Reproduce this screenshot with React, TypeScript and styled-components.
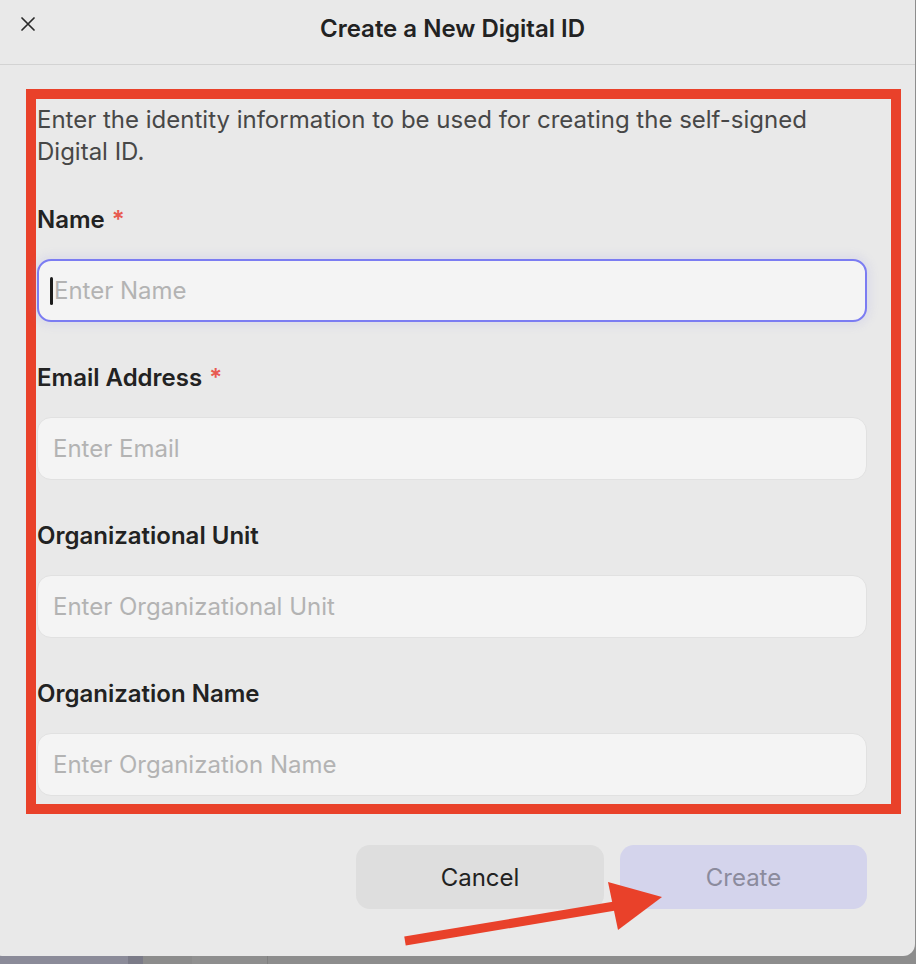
import React from "react";
import styled, { createGlobalStyle } from "styled-components";

const GlobalStyle = createGlobalStyle`
  html, body {
    margin: 0;
    padding: 0;
    overflow: hidden;
    background: #8c8c8c;
  }
  * { box-sizing: border-box; }
`;

const Page = styled.div`
  width: 916px;
  height: 964px;
  overflow: hidden;
  font-family: Inter, "Noto Sans", "Liberation Sans", sans-serif;
  background: linear-gradient(
    to right,
    #8b8b99 0 128px,
    #7b7b88 128px 143px,
    #8c8c8c 143px 192px,
    #919191 192px 200px,
    #8e8e8e 200px 267px,
    #808080 267px 268px,
    #8d8d8d 268px
  );
`;

const Dialog = styled.div`
  position: relative;
  margin-left: -10px;
  width: 925px;
  height: 956px;
  background: #e9e9e9;
  border-radius: 0 0 12px 12px;
  display: flex;
  flex-direction: column;
`;

const Header = styled.header`
  height: 65px;
  border-bottom: 1px solid #d3d3d3;
  display: grid;
  grid-template-columns: 1fr auto 1fr;
  align-items: center;
`;

const CloseButton = styled.button`
  justify-self: start;
  margin-left: 29px;
  margin-top: -16px;
  width: 18px;
  height: 18px;
  padding: 0;
  border: none;
  background: transparent;
  display: flex;
  align-items: center;
  justify-content: center;
  cursor: pointer;
`;

const Title = styled.h1`
  margin: -7px 0 0;
  font-size: 24px;
  line-height: 32px;
  font-weight: 600;
  color: #222;
`;

const Body = styled.div`
  padding: 24px 0 0 36px;
`;

const Highlight = styled.div`
  width: 875px;
  border: 10px solid #e9412a;
  padding: 5px 24px 8px 1px;
`;

const Description = styled.p`
  margin: 0 0 36px;
  font-size: 24px;
  line-height: 32px;
  color: #474747;
`;

const Field = styled.div`
  display: flex;
  flex-direction: column;
  margin-bottom: 40px;
  &:last-child { margin-bottom: 0; }
`;

const Label = styled.label`
  height: 32px;
  font-size: 24px;
  line-height: 32px;
  font-weight: 560;
  color: #222;
  margin-bottom: 23px;
  display: flex;
  align-items: flex-start;
  gap: 7px;
`;

const Required = styled.span`
  color: #e85a50;
  font-size: 24px;
  line-height: 32px;
  font-weight: 600;
`;

const InputWrap = styled.div`
  position: relative;
`;

const Input = styled.input<{ $focused?: boolean }>`
  width: 100%;
  height: 63px;
  border-radius: 14px;
  background: #f4f4f4;
  border: ${(p) => (p.$focused ? "2px solid #7b7cf2" : "1px solid #e1e1e1")};
  padding: ${(p) => (p.$focused ? "0 15px" : "0 15px 0 15px")};
  box-shadow: ${(p) =>
    p.$focused ? "0 0 10px 3px rgba(140, 140, 230, 0.16)" : "none"};
  font-family: inherit;
  font-size: 24px;
  color: #222;
  outline: none;
  caret-color: transparent;
  &::placeholder {
    color: #b3b3b3;
  }
`;

const Caret = styled.span`
  position: absolute;
  left: 13px;
  top: 18px;
  width: 3px;
  height: 28px;
  border-radius: 2px;
  background: #1c1c1c;
`;

const Footer = styled.div`
  margin-top: 31px;
  padding-right: 48px;
  display: flex;
  justify-content: flex-end;
  gap: 16px;
`;

const Button = styled.button<{ $primary?: boolean }>`
  width: ${(p) => (p.$primary ? "247px" : "248px")};
  height: 64px;
  border: none;
  border-radius: 14px;
  font-family: inherit;
  font-size: 24px;
  background: ${(p) => (p.$primary ? "#d4d4ec" : "#dedede")};
  color: ${(p) => (p.$primary ? "#8b8b9d" : "#222")};
  cursor: pointer;
`;

const ArrowOverlay = styled.svg`
  position: absolute;
  left: 410px;
  top: 875px;
  width: 270px;
  height: 75px;
  pointer-events: none;
`;

const fields = [
  { label: "Name", placeholder: "Enter Name", required: true, focused: true },
  { label: "Email Address", placeholder: "Enter Email", required: true },
  { label: "Organizational Unit", placeholder: "Enter Organizational Unit" },
  { label: "Organization Name", placeholder: "Enter Organization Name" },
];

export default function App() {
  return (
    <Page>
      <GlobalStyle />
      <Dialog>
        <Header>
          <CloseButton aria-label="Close">
            <svg width="14" height="14" viewBox="0 0 14 14">
              <path
                d="M1 1 L13 13 M13 1 L1 13"
                stroke="#2a2a2a"
                strokeWidth="1.7"
                strokeLinecap="round"
              />
            </svg>
          </CloseButton>
          <Title>Create a New Digital ID</Title>
          <span />
        </Header>
        <Body>
          <Highlight>
            <Description>
              Enter the identity information to be used for creating the
              self-signed Digital ID.
            </Description>
            {fields.map((f) => (
              <Field key={f.label}>
                <Label>
                  {f.label}
                  {f.required && <Required>*</Required>}
                </Label>
                <InputWrap>
                  <Input placeholder={f.placeholder} $focused={f.focused} />
                  {f.focused && <Caret />}
                </InputWrap>
              </Field>
            ))}
          </Highlight>
        </Body>
        <Footer>
          <Button>Cancel</Button>
          <Button $primary>Create</Button>
        </Footer>
        <ArrowOverlay viewBox="0 0 270 75">
          <line x1="5" y1="66" x2="215" y2="31" stroke="#e9412a" strokeWidth="9" />
          <polygon points="208,7 262,22 218,55" fill="#e9412a" />
        </ArrowOverlay>
      </Dialog>
    </Page>
  );
}
